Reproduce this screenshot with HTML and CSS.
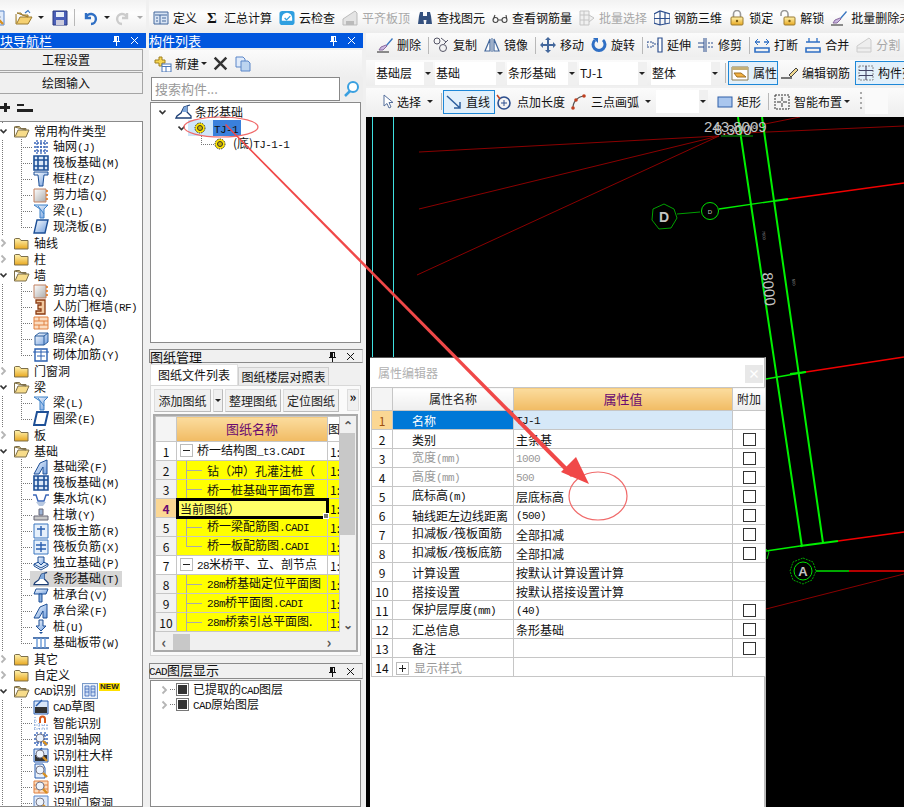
FILE: index.html
```html
<!DOCTYPE html>
<html lang="zh-CN">
<head>
<meta charset="utf-8">
<title>构件列表</title>
<link rel="stylesheet" href="styles.css">
</head>
<body>
<svg class="sprite" xmlns="http://www.w3.org/2000/svg">
<defs>
<linearGradient id="gy" x1="0" y1="0" x2="0" y2="1"><stop offset="0" stop-color="#fff3b0"/><stop offset="1" stop-color="#e8a820"/></linearGradient>
<linearGradient id="gb" x1="0" y1="0" x2="1" y2="1"><stop offset="0" stop-color="#ffffff"/><stop offset="1" stop-color="#6f9ede"/></linearGradient>
<linearGradient id="gw" x1="0" y1="0" x2="1" y2="1"><stop offset="0" stop-color="#fff"/><stop offset="1" stop-color="#aaa"/></linearGradient>
<symbol id="folder" viewBox="0 0 17 16"><path d="M1.5 4V14H15V5.5H8L6.5 3.5H2.5Z" fill="url(#gy)" stroke="#7d6f4a"/></symbol>
<symbol id="folderopen" viewBox="0 0 17 16"><path d="M1.5 4V14H13L16 7H5L2.5 13M13 7V5.5H8L6.5 3.5H2.5L1.5 4Z" fill="#f7dc8a" stroke="#7d6f4a"/></symbol>
<symbol id="chev" viewBox="0 0 8 16"><path d="M.5 6.5L3.5 9.5L6.5 6.5" fill="none" stroke="#333" stroke-width="1.6"/></symbol>
<symbol id="chevg" viewBox="0 0 8 16"><path d="M1.5 4.5L5 8L1.5 11.5" fill="none" stroke="#b5b5b5" stroke-width="1.8"/></symbol>
<symbol id="grid" viewBox="0 0 16 16"><path d="M1 4H15M1 8H15M1 12H15M4 1V15M8 1V15M12 1V15" stroke="#3a66b8" stroke-width="1.3" stroke-dasharray="2 1"/></symbol>
<symbol id="raft" viewBox="0 0 16 16"><path d="M1 1H15V15H1Z" fill="#dbe8f8" stroke="#1d4f96" stroke-width="1.6"/><path d="M5 1V15M11 1V15M1 5H15M1 11H15" stroke="#1d4f96" stroke-width="1.6"/></symbol>
<symbol id="col" viewBox="0 0 16 16"><path d="M1 1H15V4H11L10 13V15H6V13L5 4H1Z" fill="url(#gb)" stroke="#1d4f96"/></symbol>
<symbol id="wall" viewBox="0 0 16 16"><path d="M1 2H13V15H1Z" fill="url(#gw)" stroke="#c08060"/><path d="M13 4H15M13 8H15M13 12H15" stroke="#e07010" stroke-width="1.5"/></symbol>
<symbol id="beam" viewBox="0 0 16 16"><path d="M1 2H15L11 6V15H7V6Z" fill="url(#gb)" stroke="#3a80c8"/><path d="M5 3L11 11" stroke="#3a80c8"/></symbol>
<symbol id="slab" viewBox="0 0 16 16"><path d="M4 1H15L12 14H1Z" fill="url(#gb)" stroke="#1d4f96" stroke-width="1.4"/></symbol>
<symbol id="ringb" viewBox="0 0 16 16"><path d="M4 1H15L12 14H1Z" fill="#fff" stroke="#1d4f96" stroke-width="2"/></symbol>
<symbol id="rf" viewBox="0 0 16 16"><path d="M3 1H12V15H3V12H8V10H5V6H8V4H3Z" fill="#f2c9a0" stroke="#8a3a10" stroke-width="1.3"/></symbol>
<symbol id="brick" viewBox="0 0 16 16"><path d="M1 2H15V14H1Z" fill="#fbdcc0" stroke="#e08040"/><path d="M1 6H15M1 10H15M6 2V6M11 6V10M6 10V14" stroke="#e08040"/></symbol>
<symbol id="hb" viewBox="0 0 16 16"><path d="M2 5L6 2H15V11L11 14H2Z" fill="url(#gb)" stroke="#2d5f9e"/><path d="M2 5H11V14M11 5L15 2" fill="none" stroke="#2d5f9e"/></symbol>
<symbol id="jj" viewBox="0 0 16 16"><path d="M2 2H14V14H2Z" fill="#fff" stroke="#2a5fb0" stroke-width="1.4"/><path d="M0 5H16M8 3V13M4 9H12" stroke="#2a5fb0"/></symbol>
<symbol id="jl" viewBox="0 0 16 16"><path d="M1 15L7 4L14 1V15H10V8L6 15Z" fill="url(#gb)" stroke="#1d4f96"/></symbol>
<symbol id="pit" viewBox="0 0 16 16"><path d="M0 4H3L5 10H11L13 4H16" fill="none" stroke="#3a66b8" stroke-width="1.4"/><path d="M3 11H13L10 15H6Z" fill="#b8c8e0"/></symbol>
<symbol id="pier" viewBox="0 0 16 16"><path d="M6 2H10V8H6Z" fill="#9db4d6" stroke="#667"/><path d="M1 9H15V13H1Z" fill="#c8c8c8" stroke="#667"/></symbol>
<symbol id="rm" viewBox="0 0 16 16"><path d="M1 1H15V15H1Z" fill="#e6f0fb" stroke="#3a76c0"/><path d="M4 6H12M8 3V13" stroke="#2a5fb0" stroke-width="1.4"/></symbol>
<symbol id="rn" viewBox="0 0 16 16"><path d="M1 1H15V15H1Z" fill="#e6f0fb" stroke="#3a76c0"/><path d="M3 6H13M3 10H13M8 3V13" stroke="#2a5fb0" stroke-width="1.4"/></symbol>
<symbol id="iso" viewBox="0 0 16 16"><path d="M1 9L8 13L15 9L8 6Z" fill="#dbe8f8" stroke="#1d4f96"/><path d="M5 7V2H11V7L8 10Z" fill="url(#gb)" stroke="#1d4f96"/><path d="M1 9V11L8 15L15 11V9" fill="none" stroke="#1d4f96"/></symbol>
<symbol id="strip" viewBox="0 0 17 16"><path d="M1 14H16V12L12 8V2L15 1L9 3L6 9L2 12Z" fill="#fff" stroke="#1d3f76" stroke-width="1.3"/><path d="M9 3L12 2V8H7Z" fill="#7fa8dc"/></symbol>
<symbol id="cap" viewBox="0 0 16 16"><path d="M3 2H15L13 7H1Z" fill="url(#gb)" stroke="#1d4f96"/><path d="M6 7H9V15H6Z" fill="#8ab0e0" stroke="#1d4f96"/></symbol>
<symbol id="pile" viewBox="0 0 16 16"><path d="M6 1H10V7H13L8 12L3 7H6Z" fill="url(#gb)" stroke="#1d4f96"/><path d="M6 13L8 15L10 13Z" fill="#1d4f96"/></symbol>
<symbol id="band" viewBox="0 0 16 16"><path d="M0 3H16M0 13H16" stroke="#1d4f96" stroke-width="1.4"/><path d="M4 3V13M8 3V13M12 3V13" stroke="#6a9ad8" stroke-width="1.4"/></symbol>
<symbol id="cad" viewBox="0 0 16 16"><path d="M1 2H15V15H1Z" fill="#d9e6f8" stroke="#2a5fb0"/><path d="M3 7L9 1" stroke="#2a5fb0" stroke-width="1.4"/><rect x="2" y="8" width="12" height="6" fill="#333"/></symbol>
<symbol id="magnet" viewBox="0 0 16 16"><path d="M1 6H4M1 10H16M1 14H16M2 2V15M6 8V15M10 10V15M14 10V15" stroke="#5a86c8" stroke-dasharray="1 1.5"/><path d="M6 8V4A3.5 3.5 0 0 1 13 4V8H11V4A1.5 1.5 0 0 0 8 4V8Z" fill="#d85a1c"/></symbol>
<symbol id="mag" viewBox="0 0 16 16"><circle cx="7" cy="7" r="4" fill="#eef4fc" stroke="#778"/><path d="M10 10L14 14" stroke="#d89020" stroke-width="2.4"/></symbol>
<symbol id="sgrid" viewBox="0 0 16 16"><use href="#grid"/><use href="#mag"/></symbol>
<symbol id="scol" viewBox="0 0 16 16"><path d="M2 1H10L12 5V15H2Z" fill="#e8f0fa" stroke="#2a5fb0"/><use href="#mag"/></symbol>
<symbol id="swall" viewBox="0 0 16 16"><use href="#brick"/><use href="#mag"/></symbol>
<symbol id="sdoor" viewBox="0 0 16 16"><path d="M1 1H15V15H1Z" fill="#dfeafa" stroke="#5a86c8"/><use href="#mag"/></symbol>
<symbol id="scad" viewBox="0 0 16 16"><use href="#cad"/><use href="#mag"/></symbol>
<symbol id="gear" viewBox="0 0 12 12"><circle cx="6" cy="6" r="5" fill="#ffe600" stroke="#333" stroke-dasharray="1.5 1"/><circle cx="6" cy="6" r="2.5" fill="#c8b000" stroke="#333"/></symbol>
<symbol id="pin" viewBox="0 0 9 11"><path d="M2 1H7V6H8V7H5V11H4V7H1V6H2ZM5 2V6H6V2Z" fill="currentColor"/></symbol>
<symbol id="x" viewBox="0 0 9 9"><path d="M1 1L8 8M8 1L1 8" stroke="currentColor" fill="none"/></symbol>
<symbol id="openf" viewBox="0 0 18 16"><path d="M1 4V14H13L17 7H5L2 13M13 7V5H7L6 3H2Z" fill="#f5d070" stroke="#9a7a30"/><path d="M10 3L13 0.5L15 3" fill="none" stroke="#3a76c0" stroke-width="1.2"/></symbol>
<symbol id="save" viewBox="0 0 16 16"><path d="M1 1H15V15H1Z" fill="#4a5fb8" stroke="#2a3a80"/><rect x="4" y="2" width="8" height="5" fill="#e8eef8"/><rect x="4" y="10" width="8" height="5" fill="#ccd"/></symbol>
<symbol id="undo" viewBox="0 0 14 16"><path d="M3 3V8H8M3 8A5 5 0 1 1 8 14" fill="none" stroke="#2f6fc4" stroke-width="2.4"/></symbol>
<symbol id="redo" viewBox="0 0 14 16"><path d="M11 3V8H6M11 8A5 5 0 1 0 6 14" fill="none" stroke="#ccc" stroke-width="2.4"/></symbol>
<symbol id="def" viewBox="0 0 16 16"><path d="M1 2H15V14H1Z" fill="#d8e4f4" stroke="#44689c"/><path d="M2 5H14M7 5V14M9 8H13M9 11H13M3 8H5M3 11H5" stroke="#44689c"/></symbol>
<symbol id="cloud" viewBox="0 0 17 16"><rect x="0.5" y="0.5" width="16" height="15" rx="3" fill="#2f9fe0"/><path d="M3 8A5.500 5.500 0 0 1 14 8V11H3Z" fill="#fff"/><path d="M6 8L8 10L12 6" fill="none" stroke="#2f9fe0" stroke-width="1.4"/></symbol>
<symbol id="level" viewBox="0 0 16 16"><path d="M1 15V9L13 1L15 3V15Z" fill="#e4e4e4" stroke="#bbb"/><path d="M4 11H12V15H4Z" fill="#bbb"/></symbol>
<symbol id="bino" viewBox="0 0 16 16"><path d="M3 2H6V6L7 14H1L2 6ZM10 2H13L14 6L15 14H9L10 6ZM6 6H10V10H6Z" fill="#34507e"/></symbol>
<symbol id="glasses" viewBox="0 0 16 16"><path d="M1 10A2.500 2.500 0 1 0 6 10A2.500 2.500 0 1 0 1 10M10 10A2.500 2.500 0 1 0 15 10A2.500 2.500 0 1 0 10 10M6 10H10M1 10L3 5M15 10L14 5" fill="none" stroke="#444" stroke-width="1.1"/></symbol>
<symbol id="batch" viewBox="0 0 16 16"><path d="M1 1H10V15H1ZM1 5H10M1 10H10M5 1V15M10 5L15 8L10 12" fill="#f0f0f0" stroke="#c4c4c4"/></symbol>
<symbol id="r3d" viewBox="0 0 16 16"><path d="M0 4L6 1L16 4V13L6 15L0 13ZM6 1V15M11 2V14M0 8.500H16" fill="none" stroke="#2d4f8e" stroke-width="1.2"/></symbol>
<symbol id="lock" viewBox="0 0 14 16"><path d="M3.500 7V4A3.500 3.500 0 0 1 10.500 4V7" fill="none" stroke="#999" stroke-width="1.6"/><rect x="1" y="7" width="12" height="8" rx="1" fill="url(#gy)" stroke="#9a7a30"/><circle cx="7" cy="11" r="1.200" fill="#7a5a10"/></symbol>
<symbol id="unlock" viewBox="0 0 16 16"><path d="M1 6V4A3 3 0 0 1 8 4V7" fill="none" stroke="#999" stroke-width="1.6"/><rect x="4" y="7" width="11" height="8" rx="1" fill="url(#gy)" stroke="#9a7a30"/><circle cx="9.500" cy="11" r="1.200" fill="#7a5a10"/></symbol>
<symbol id="brush" viewBox="0 0 16 16"><path d="M9 8L15 1L16 2L10 9Z" fill="#3a76c0"/><path d="M9 8L10 9L6 13H2L4 10Z" fill="#c9b8e0" stroke="#8a6aa0"/><path d="M0 15H12" stroke="#222"/></symbol>
<symbol id="newi" viewBox="0 0 18 16"><path d="M1 4H5V1H8V4H11V7H8V10H5V7H1Z" fill="#f7d650" stroke="#a08020"/><rect x="8" y="8" width="9" height="8" fill="#fff" stroke="#4a76b8"/><path d="M8 10.500H17M12 11V16" stroke="#4a76b8"/></symbol>
<symbol id="copyd" viewBox="0 0 16 16"><path d="M1 1H8L10 3V11H1Z" fill="#e0ebfa" stroke="#5a86c8"/><path d="M6 5H13L15 7V15H6Z" fill="#bcd4f0" stroke="#5a86c8"/></symbol>
<symbol id="copyr" viewBox="0 0 16 16"><circle cx="4" cy="4" r="3" fill="none" stroke="#556"/><circle cx="10" cy="11" r="3.500" fill="none" stroke="#556"/><path d="M8 1L13 5M15 3L11 7" stroke="#556"/></symbol>
<symbol id="mirror" viewBox="0 0 16 16"><path d="M6 2V14H1ZM10 2V14H15Z" fill="#fff" stroke="#44689c" stroke-width="1.2"/><path d="M8 1V15" stroke="#44689c"/></symbol>
<symbol id="move" viewBox="0 0 16 16"><path d="M8 0L11 3H9V7H13V5L16 8L13 11V9H9V13H11L8 16L5 13H7V9H3V11L0 8L3 5V7H7V3H5Z" fill="#44689c"/></symbol>
<symbol id="rotate" viewBox="0 0 14 16"><path d="M3 3A6 6 0 1 0 11 3" fill="none" stroke="#2f6fc4" stroke-width="3"/><path d="M1 1H6V6Z" fill="#2f6fc4"/></symbol>
<symbol id="extend" viewBox="0 0 16 16"><path d="M11 1H15V15H11Z" fill="#fff" stroke="#2d4f8e" stroke-width="1.200"/><path d="M0 5H6V10H0ZM7 7H11" fill="none" stroke="#2d4f8e" stroke-dasharray="2 1"/></symbol>
<symbol id="trim" viewBox="0 0 16 16"><path d="M6 1V15M0 6H6M0 10H6" stroke="#2d4f8e" fill="none"/><path d="M10 6H16M10 10H16" stroke="#2d4f8e" stroke-dasharray="2 1"/><path d="M8 1V15" stroke="#2d4f8e"/></symbol>
<symbol id="brk" viewBox="0 0 16 16"><path d="M1 11H15V15H1ZM1 5H6M10 5H15" fill="none" stroke="#2f6fc4" stroke-width="1.600"/><path d="M4 2L1 5L4 8M12 2L15 5L12 8" fill="none" stroke="#2f6fc4"/></symbol>
<symbol id="merge" viewBox="0 0 16 16"><path d="M1 11H15V15H1Z" fill="none" stroke="#2f6fc4" stroke-width="1.600"/><path d="M1 5H15M4 1V5M12 1V5" stroke="#2f6fc4" stroke-width="1.300"/></symbol>
<symbol id="split" viewBox="0 0 16 16"><path d="M1 15V9L13 1L15 3V15Z" fill="#eee" stroke="#ccc"/><path d="M1 11H15" stroke="#ccc"/></symbol>
<symbol id="attr" viewBox="0 0 18 16"><path d="M1 2H17V15H1Z" fill="#fff" stroke="#8a7a50"/><path d="M1 2H17V5H1Z" fill="#c4b078"/><path d="M3 8H10L15 12H6Z" fill="#f2b040" stroke="#a07020"/></symbol>
<symbol id="pencil" viewBox="0 0 18 16"><path d="M8 10L15 3L17 5L10 12Z" fill="#f0d890" stroke="#444"/><path d="M0 13H11" stroke="#222" stroke-width="1.200"/></symbol>
<symbol id="clist" viewBox="0 0 16 16"><path d="M1 1H15V15H1Z" fill="none" stroke="#888" stroke-dasharray="2 1"/><path d="M8 1V15M1 5.500H15M1 10.500H15" stroke="#446" stroke-width="1.100"/></symbol>
<symbol id="cursor" viewBox="0 0 12 16"><path d="M2 1V12L5 9.500L7 14L9 13L7 8.500H11Z" fill="#fff" stroke="#56709c"/></symbol>
<symbol id="line" viewBox="0 0 16 16"><path d="M1 2L14 14M14 8V14H8" fill="none" stroke="#2d5f9e" stroke-width="1.500"/></symbol>
<symbol id="ptlen" viewBox="0 0 16 16"><circle cx="8" cy="9" r="6" fill="none" stroke="#2d4f8e" stroke-width="1.600"/><path d="M8 6V12M5 9H11" stroke="#2d4f8e"/><path d="M1 1L4 5" stroke="#c04020" stroke-width="1.600"/></symbol>
<symbol id="arc" viewBox="0 0 16 16"><path d="M2 15A12 12 0 0 1 13 2" fill="none" stroke="#555" stroke-width="1.200"/><circle cx="2" cy="14" r="1.800" fill="#c04020"/><circle cx="5" cy="6" r="1.800" fill="#c04020"/><circle cx="13" cy="2" r="1.800" fill="#c04020"/></symbol>
<symbol id="rect" viewBox="0 0 16 16"><rect x="1" y="3" width="14" height="10" fill="#a9c6ee" stroke="#2f5fa8"/></symbol>
<symbol id="smart" viewBox="0 0 16 16"><rect x="1" y="1" width="14" height="14" fill="#f4f4f4" stroke="#333" stroke-dasharray="2 1"/><path d="M8 3V7M8 9V13M3 8H7M9 8H13" stroke="#333"/></symbol>
<symbol id="find" viewBox="0 0 18 18"><circle cx="10" cy="7" r="5" fill="#fff" stroke="#3aa0e0" stroke-width="2"/><path d="M7 11L2 16" stroke="#3aa0e0" stroke-width="2.500"/></symbol>
<symbol id="minusbox" viewBox="0 0 13 13"><rect x="0.500" y="0.500" width="12" height="12" fill="#fff" stroke="#bbb"/><path d="M3 6.500H10" stroke="#222"/></symbol>
<symbol id="plusbox" viewBox="0 0 13 13"><rect x="0.500" y="0.500" width="12" height="12" fill="#fff" stroke="#bbb"/><path d="M3 6.500H10M6.500 3V10" stroke="#222"/></symbol>
<symbol id="cols" viewBox="0 0 16 16"><rect x="0.500" y="0.500" width="15" height="15" fill="#e8f0fa" stroke="#7a9ac8"/><path d="M3 3H7V13H3ZM9 3H13V13H9ZM3 6H7M3 9H7M9 6H13M9 9H13" fill="#cfe0f5" stroke="#3a66b8" stroke-width="0.800"/></symbol>
</defs>
</svg>

<div class="app">
  <header class="topbar">
    <div class="topleft">
      <svg class="doc"><use href="#sdoor"/></svg>
      <svg class="ico18 ml-open"><use href="#openf"/></svg>
      <span class="dd ml-dd"></span>
      <svg class="ico16 ml-save"><use href="#save"/></svg>
      <span class="sep ml-sepa"></span>
      <svg class="ico16 ml-undo"><use href="#undo"/></svg>
      <span class="dd ml-dd2"></span>
      <svg class="ico16 ml-redo"><use href="#redo"/></svg>
      <span class="dd ddg ml-dd2"></span>
    </div>
    <div class="tb tb-main">
      <span class="btn first"><svg class="ico16"><use href="#def"/></svg>定义</span>
      <span class="btn"><b class="sigma">Σ</b>汇总计算</span>
      <span class="btn"><svg class="ico16"><use href="#cloud"/></svg>云检查</span>
      <span class="btn off"><svg class="ico16"><use href="#level"/></svg>平齐板顶</span>
      <span class="btn"><svg class="ico16"><use href="#bino"/></svg>查找图元</span>
      <span class="btn"><svg class="ico16"><use href="#glasses"/></svg>查看钢筋量</span>
      <span class="btn off"><svg class="ico16"><use href="#batch"/></svg>批量选择</span>
      <span class="btn"><svg class="ico16"><use href="#r3d"/></svg>钢筋三维</span>
      <span class="btn"><svg class="ico16"><use href="#lock"/></svg>锁定</span>
      <span class="btn"><svg class="ico16"><use href="#unlock"/></svg>解锁</span>
      <span class="btn"><svg class="ico16"><use href="#brush"/></svg>批量删除未</span>
    </div>
  </header>

  <main class="main">
    <aside class="nav">
      <div class="title"><span class="title-t cut">块导航栏</span><svg class="pin"><use href="#pin"/></svg><svg class="close"><use href="#x"/></svg></div>
      <div class="navbtn">工程设置</div>
      <div class="navbtn nb2">绘图输入</div>
      <div class="expand"><span class="pm plus"></span><span class="pm minus"></span></div>
      <div class="navtree">
        <div class="t1"><svg class="chev"><use href="#chev"/></svg><svg class="fld"><use href="#folderopen"/></svg>常用构件类型</div>
        <div class="t2"><svg class="ico16"><use href="#grid"/></svg><span>轴网<i class="m">(J)</i></span></div>
        <div class="t2"><svg class="ico16"><use href="#raft"/></svg><span>筏板基础<i class="m">(M)</i></span></div>
        <div class="t2"><svg class="ico16"><use href="#col"/></svg><span>框柱<i class="m">(Z)</i></span></div>
        <div class="t2"><svg class="ico16"><use href="#wall"/></svg><span>剪力墙<i class="m">(Q)</i></span></div>
        <div class="t2"><svg class="ico16"><use href="#beam"/></svg><span>梁<i class="m">(L)</i></span></div>
        <div class="t2 end"><svg class="ico16"><use href="#slab"/></svg><span>现浇板<i class="m">(B)</i></span></div>
        <div class="t1"><svg class="chev"><use href="#chevg"/></svg><svg class="fld"><use href="#folder"/></svg>轴线</div>
        <div class="t1"><svg class="chev"><use href="#chevg"/></svg><svg class="fld"><use href="#folder"/></svg>柱</div>
        <div class="t1"><svg class="chev"><use href="#chev"/></svg><svg class="fld"><use href="#folderopen"/></svg>墙</div>
        <div class="t2"><svg class="ico16"><use href="#wall"/></svg><span>剪力墙<i class="m">(Q)</i></span></div>
        <div class="t2"><svg class="ico16"><use href="#rf"/></svg><span>人防门框墙<i class="m">(RF)</i></span></div>
        <div class="t2"><svg class="ico16"><use href="#brick"/></svg><span>砌体墙<i class="m">(Q)</i></span></div>
        <div class="t2"><svg class="ico16"><use href="#hb"/></svg><span>暗梁<i class="m">(A)</i></span></div>
        <div class="t2 end"><svg class="ico16"><use href="#jj"/></svg><span>砌体加筋<i class="m">(Y)</i></span></div>
        <div class="t1"><svg class="chev"><use href="#chevg"/></svg><svg class="fld"><use href="#folder"/></svg>门窗洞</div>
        <div class="t1"><svg class="chev"><use href="#chev"/></svg><svg class="fld"><use href="#folderopen"/></svg>梁</div>
        <div class="t2"><svg class="ico16"><use href="#beam"/></svg><span>梁<i class="m">(L)</i></span></div>
        <div class="t2 end"><svg class="ico16"><use href="#ringb"/></svg><span>圈梁<i class="m">(E)</i></span></div>
        <div class="t1"><svg class="chev"><use href="#chevg"/></svg><svg class="fld"><use href="#folder"/></svg>板</div>
        <div class="t1"><svg class="chev"><use href="#chev"/></svg><svg class="fld"><use href="#folderopen"/></svg>基础</div>
        <div class="t2"><svg class="ico16"><use href="#jl"/></svg><span>基础梁<i class="m">(F)</i></span></div>
        <div class="t2"><svg class="ico16"><use href="#raft"/></svg><span>筏板基础<i class="m">(M)</i></span></div>
        <div class="t2"><svg class="ico16"><use href="#pit"/></svg><span>集水坑<i class="m">(K)</i></span></div>
        <div class="t2"><svg class="ico16"><use href="#pier"/></svg><span>柱墩<i class="m">(Y)</i></span></div>
        <div class="t2"><svg class="ico16"><use href="#rm"/></svg><span>筏板主筋<i class="m">(R)</i></span></div>
        <div class="t2"><svg class="ico16"><use href="#rn"/></svg><span>筏板负筋<i class="m">(X)</i></span></div>
        <div class="t2"><svg class="ico16"><use href="#iso"/></svg><span>独立基础<i class="m">(P)</i></span></div>
        <div class="t2"><span class="hl"><svg class="ico16"><use href="#strip"/></svg><span>条形基础<i class="m">(T)</i></span></span></div>
        <div class="t2"><svg class="ico16"><use href="#cap"/></svg><span>桩承台<i class="m">(V)</i></span></div>
        <div class="t2"><svg class="ico16"><use href="#jl"/></svg><span>承台梁<i class="m">(F)</i></span></div>
        <div class="t2"><svg class="ico16"><use href="#pile"/></svg><span>桩<i class="m">(U)</i></span></div>
        <div class="t2 end"><svg class="ico16"><use href="#band"/></svg><span>基础板带<i class="m">(W)</i></span></div>
        <div class="t1"><svg class="chev"><use href="#chevg"/></svg><svg class="fld"><use href="#folder"/></svg>其它</div>
        <div class="t1"><svg class="chev"><use href="#chevg"/></svg><svg class="fld"><use href="#folder"/></svg>自定义</div>
        <div class="t1"><svg class="chev"><use href="#chev"/></svg><svg class="fld"><use href="#folderopen"/></svg><span><i class="m">CAD</i>识别</span><svg class="ico16 cols"><use href="#cols"/></svg><span class="new">NEW</span></div>
        <div class="t2"><svg class="ico16"><use href="#cad"/></svg><span><i class="m">CAD</i>草图</span></div>
        <div class="t2"><svg class="ico16"><use href="#magnet"/></svg><span>智能识别</span></div>
        <div class="t2"><svg class="ico16"><use href="#sgrid"/></svg><span>识别轴网</span></div>
        <div class="t2"><svg class="ico16"><use href="#scad"/></svg><span>识别柱大样</span></div>
        <div class="t2"><svg class="ico16"><use href="#scol"/></svg><span>识别柱</span></div>
        <div class="t2"><svg class="ico16"><use href="#swall"/></svg><span>识别墙</span></div>
        <div class="t2"><svg class="ico16"><use href="#sdoor"/></svg><span>识别门窗洞</span></div>
      </div>
    </aside>

    <section class="mid">
      <div class="title"><span class="title-t">构件列表</span><svg class="pin"><use href="#pin"/></svg><svg class="close"><use href="#x"/></svg></div>
      <div class="newbar">
        <svg class="newicon"><use href="#newi"/></svg><span class="newtxt">新建</span><span class="dd dd-new"></span>
        <svg class="del"><use href="#x"/></svg><svg class="ico16 cpy"><use href="#copyd"/></svg>
      </div>
      <div class="search"><div class="sinput">搜索构件...</div><div class="sbtn"><svg class="ico18"><use href="#find"/></svg></div></div>
      <div class="ctree">
        <div class="c1"><svg class="chev"><use href="#chev"/></svg><svg class="strip"><use href="#strip"/></svg>条形基础</div>
        <div class="c2"><svg class="chev"><use href="#chev"/></svg><span class="csel"><svg class="gear"><use href="#gear"/></svg></span><span class="cname"><i class="m">TJ-1</i></span></div>
        <div class="c3"><svg class="gear"><use href="#gear"/></svg><span class="csub">(底)<i class="m">TJ-1-1</i></span></div>
      </div>

      <div class="title grey t-draw"><span class="title-t">图纸管理</span><svg class="pin"><use href="#pin"/></svg><svg class="close"><use href="#x"/></svg></div>
      <div class="tabs"><span class="tab on">图纸文件列表</span><span class="tab">图纸楼层对照表</span></div>
      <div class="dpanel">
        <div class="dbar"><span class="dbtn w57">添加图纸</span><span class="dbtn w10"><span class="dd"></span></span><span class="dbtn w56">整理图纸</span><span class="dbtn w56">定位图纸</span><span class="more">»</span></div>
        <div class="dframe">
          <div class="dscroll">
            <table class="dt">
              <colgroup><col class="c-n"><col class="c-name"><col class="c-r"></colgroup>
              <thead><tr><th class="n"></th><th class="hot">图纸名称</th><th class="plain">图</th></tr></thead>
              <tbody>
                <tr><td class="n">1</td><td class="w"><svg class="box"><use href="#minusbox"/></svg>桥一结构图<i class="m">_t3.CADI</i></td><td>1:</td></tr>
                <tr class="y"><td class="n">2</td><td class="l">钻（冲）孔灌注桩（</td><td>1:</td></tr>
                <tr class="y"><td class="n">3</td><td class="l">桥一桩基础平面布置</td><td>1:</td></tr>
                <tr class="y cur"><td class="n">4</td><td class="active">当前图纸）</td><td>1:</td></tr>
                <tr class="y"><td class="n">5</td><td class="l">桥一梁配筋图<i class="m">.CADI</i></td><td>1:</td></tr>
                <tr class="y"><td class="n">6</td><td class="l last">桥一板配筋图<i class="m">.CADI</i></td><td>1:</td></tr>
                <tr><td class="n">7</td><td class="w"><svg class="box"><use href="#minusbox"/></svg><i class="m">28</i>米桥平、立、剖节点</td><td>1:</td></tr>
                <tr class="y"><td class="n">8</td><td class="l"><i class="m">28m</i>桥基础定位平面图</td><td>1:</td></tr>
                <tr class="y"><td class="n">9</td><td class="l"><i class="m">28m</i>桥平面图<i class="m">.CADI</i></td><td>1:</td></tr>
                <tr class="y"><td class="n">10</td><td class="l"><i class="m">28m</i>桥索引总平面图.</td><td>1:</td></tr>
              </tbody>
            </table>
            <div class="vbar"><span class="arr">⌃</span><div class="vthumb"></div><span class="arr arr-d">⌄</span></div>
          </div>
          <div class="hbar"><span class="harr">‹</span><div class="hthumb"></div><span class="harr harr-r">›</span></div>
        </div>
      </div>

      <div class="title grey t-cad"><span class="title-t cadt"><i class="m">CAD</i>图层显示</span><svg class="pin"><use href="#pin"/></svg><svg class="close"><use href="#x"/></svg></div>
      <div class="cadtree">
        <div class="l1"><svg class="chev"><use href="#chevg"/></svg><span class="sq"></span><span>已提取的<i class="m">CAD</i>图层</span></div>
        <div class="l1"><svg class="chev"><use href="#chevg"/></svg><span class="sq"></span><span><i class="m">CAD</i>原始图层</span></div>
      </div>
    </section>

    <section class="work">
      <div class="tb tb-edit">
        <span class="btn first"><svg class="ico16"><use href="#brush"/></svg>删除</span>
        <span class="sep"></span>
        <span class="btn"><svg class="ico16"><use href="#copyr"/></svg>复制</span>
        <span class="btn"><svg class="ico16"><use href="#mirror"/></svg>镜像</span>
        <span class="sep"></span>
        <span class="btn"><svg class="ico16"><use href="#move"/></svg>移动</span>
        <span class="btn"><svg class="ico16"><use href="#rotate"/></svg>旋转</span>
        <span class="sep"></span>
        <span class="btn"><svg class="ico16"><use href="#extend"/></svg>延伸</span>
        <span class="btn"><svg class="ico16"><use href="#trim"/></svg>修剪</span>
        <span class="sep"></span>
        <span class="btn"><svg class="ico16"><use href="#brk"/></svg>打断</span>
        <span class="btn"><svg class="ico16"><use href="#merge"/></svg>合并</span>
        <span class="btn off"><svg class="ico16"><use href="#split"/></svg>分割</span>
      </div>
      <div class="tb tb-sel">
        <span class="sel s58">基础层<span class="dd"></span></span>
        <span class="sel s70">基础<span class="dd"></span></span>
        <span class="sel s70">条形基础<span class="dd"></span></span>
        <span class="sel s68">TJ-1<span class="dd"></span></span>
        <span class="sel s69 ml4">整体<span class="dd"></span></span>
        <span class="sep sp-sel"></span>
        <span class="tog tog-a"><svg class="ico18"><use href="#attr"/></svg>属性</span>
        <span class="btn b-edit"><svg class="ico18"><use href="#pencil"/></svg>编辑钢筋</span>
        <span class="tog tog-b"><svg class="ico16"><use href="#clist"/></svg>构件列</span>
      </div>
      <div class="tb tb-draw">
        <span class="btn b-pick"><svg class="cur-i"><use href="#cursor"/></svg>选择</span>
        <span class="dd d-pick"></span>
        <span class="sep sp-pick"></span>
        <span class="tog tog-line"><svg class="ico16"><use href="#line"/></svg>直线</span>
        <span class="btn b-pt"><svg class="ico16"><use href="#ptlen"/></svg>点加长度</span>
        <span class="btn b-arc"><svg class="ico16"><use href="#arc"/></svg>三点画弧</span>
        <span class="dd d-arc"></span>
        <span class="sel s50"><span class="dd"></span></span>
        <span class="btn b-rect"><svg class="ico16"><use href="#rect"/></svg>矩形</span>
        <span class="sep sp-rect"></span>
        <span class="btn"><svg class="ico16"><use href="#smart"/></svg>智能布置</span>
        <span class="dd d-smart"></span>
        <span class="grip"></span>
        <span class="blank"></span>
      </div>

      <div class="canvas">
        <svg class="cad" viewBox="366 117 538 690" xmlns="http://www.w3.org/2000/svg">
          <g fill="none">
            <path d="M372.500 117V357M393.500 117V357" stroke="#3fe0e0"/>
            <g stroke="#8a0000">
              <path d="M419 152L719 136M419 209L719 136M417 275L719 136M722 134L904 126M760 125L800 117M766 609L904 574"/>
            </g>
            <g stroke="#00f000" stroke-width="2">
              <path d="M738 117L802 547M762 117L823 543M800 546L838 541"/>
            </g>
            <path d="M766 551L800 546M719 209L774 201M766 379L806 372" stroke="#00f000" stroke-width="1.300"/>
            <path d="M774 201L788 199M790 374L806 372" stroke="#00f000" stroke-width="2"/>
            <path d="M788 199L904 183M838 541L904 532M806 372L904 357M849 571H904" stroke="#f00000" stroke-width="1.500"/>
            <path d="M816 571H849" stroke="#00e000" stroke-width="1.300"/>
            <path d="M677 214L700 212M721 136H753" stroke="#00a000"/>
            <circle cx="710" cy="211" r="8.500" stroke="#00e000"/>
            <path d="M664 204L674 209L677 218L671 228L659 229L652 220L653 209Z" stroke="#00a000"/>
            <circle cx="803" cy="571" r="9" stroke="#00e000"/>
            <path d="M803 558L813 562L816 571L812 580L803 584L793 580L790 571L793 562Z" stroke="#00a000" stroke-dasharray="2 1"/>
            <path d="M766 549L769 552L767 559" stroke="#00c000"/>
          </g>
          <text class="ct t-d" x="664" y="222">D</text>
          <text class="ct t-a" x="803" y="576">A</text>
          <text class="ct t-s" x="710" y="214">D</text>
          <text class="ct t-top" x="704" y="132">243.8009</text>
          <text class="ct t-top" x="714" y="135">8.300°</text>
          <text class="ct t-8k" transform="translate(762 273) rotate(84)">8000</text>
          <text class="ct t-mini" transform="translate(762 231) rotate(84)">7500</text>
          <text class="ct t-mini" transform="translate(792 279) rotate(84)">500</text>
        </svg>

        <div class="editor">
          <div class="ed-title"><span>属性编辑器</span><span class="ed-x">×</span></div>
          <table class="pt">
            <colgroup><col class="p-n"><col class="p-name"><col class="p-val"><col class="p-add"></colgroup>
            <thead><tr><th class="n"></th><th class="ph">属性名称</th><th class="hot">属性值</th><th class="ph">附加</th></tr></thead>
            <tbody>
              <tr class="now"><td class="n">1</td><td class="nm">名称</td><td class="vl"><i class="m">TJ-1</i></td><td></td></tr>
              <tr><td class="n">2</td><td class="nm">类别</td><td class="vl">主条基</td><td><span class="cb"></span></td></tr>
              <tr class="dim"><td class="n">3</td><td class="nm">宽度<i class="m">(mm)</i></td><td class="vl"><i class="m">1000</i></td><td><span class="cb"></span></td></tr>
              <tr class="dim"><td class="n">4</td><td class="nm">高度<i class="m">(mm)</i></td><td class="vl"><i class="m">500</i></td><td><span class="cb"></span></td></tr>
              <tr><td class="n">5</td><td class="nm">底标高<i class="m">(m)</i></td><td class="vl">层底标高</td><td><span class="cb"></span></td></tr>
              <tr><td class="n">6</td><td class="nm">轴线距左边线距离</td><td class="vl"><i class="m">(500)</i></td><td><span class="cb"></span></td></tr>
              <tr><td class="n">7</td><td class="nm">扣减板<i class="m">/</i>筏板面筋</td><td class="vl">全部扣减</td><td><span class="cb"></span></td></tr>
              <tr><td class="n">8</td><td class="nm">扣减板<i class="m">/</i>筏板底筋</td><td class="vl">全部扣减</td><td><span class="cb"></span></td></tr>
              <tr><td class="n">9</td><td class="nm">计算设置</td><td class="vl">按默认计算设置计算</td><td></td></tr>
              <tr><td class="n">10</td><td class="nm">搭接设置</td><td class="vl">按默认搭接设置计算</td><td></td></tr>
              <tr><td class="n">11</td><td class="nm">保护层厚度<i class="m">(mm)</i></td><td class="vl"><i class="m">(40)</i></td><td><span class="cb"></span></td></tr>
              <tr><td class="n">12</td><td class="nm">汇总信息</td><td class="vl">条形基础</td><td><span class="cb"></span></td></tr>
              <tr><td class="n">13</td><td class="nm">备注</td><td class="vl"></td><td><span class="cb"></span></td></tr>
              <tr class="dim"><td class="n">14</td><td class="nm nm-p"><svg class="box"><use href="#plusbox"/></svg>显示样式</td><td class="vl"></td><td></td></tr>
            </tbody>
          </table>
        </div>
      </div>
    </section>
  </main>

  <svg class="notes" viewBox="0 0 904 807" xmlns="http://www.w3.org/2000/svg">
    <ellipse cx="221" cy="127" rx="37" ry="10" fill="none" stroke="#f06a6a" stroke-width="1.200"/>
    <ellipse cx="598" cy="496" rx="29" ry="24" fill="none" stroke="#f06a6a" stroke-width="1.200"/>
    <polygon points="225,125 226,124 574,474 571,477" fill="#f04848"/>
    <polygon points="589,484 561,472 576,457" fill="#f04848"/>
  </svg>
</div>
</body>
</html>
```
FILE: styles.css
```css
* { box-sizing: border-box; }
html, body { margin: 0; padding: 0; }
body { width: 904px; height: 807px; overflow: hidden; background: #f0f0f0; font: 12px/16px "Noto Sans CJK SC", "Liberation Sans", sans-serif; color: #111; }
.sprite { display: block; width: 0; height: 0; }
i.m { font-style: normal; font-family: "Liberation Mono", monospace; font-size: 11px; letter-spacing: -0.6px; }
.app { position: relative; width: 904px; height: 807px; overflow: hidden; }
svg { flex: none; display: block; }
.ico16 { width: 16px; height: 16px; }
.ico18 { width: 18px; height: 18px; }

/* top toolbar */
.topbar { display: flex; height: 33px; }
.topleft { width: 146px; height: 33px; display: flex; align-items: center; padding-top: 2px; background: linear-gradient(#f2f2f2, #fdfdfd 40%, #eee); overflow: hidden; }
.doc { width: 16px; height: 16px; margin-left: -11px; }
.ml-open { margin-left: 10px; }
.dd { display: inline-block; flex: none; width: 0; height: 0; border: 3px solid transparent; border-top: 3px solid #222; border-bottom: 0; }
.ddg { border-top-color: #aaa; }
.ml-dd { margin-left: 5px; }
.ml-save { margin-left: 8px; }
.ml-sepa { margin-left: 6px; height: 24px; }
.ml-undo { margin-left: 7px; }
.ml-dd2 { margin-left: 6px; }
.ml-redo { margin-left: 5px; }
.sep { flex: none; width: 1px; height: 17px; background: #b8b8b8; }
.tb { display: flex; align-items: center; white-space: nowrap; background: linear-gradient(#fbfbfb, #eeeeee); }
.tb-main { width: 755px; margin-left: 3px; height: 33px; padding: 2px 0 0 4px; background: linear-gradient(#f2f2f2, #fdfdfd 40%, #ececec); overflow: hidden; }
.btn { display: inline-flex; align-items: center; flex: none; gap: 4px; margin-left: 7px; }
.btn.first { margin-left: 0; }
.btn.off { color: #a8a8a8; }
.sigma { width: 16px; text-align: center; font: bold 15px/16px "Liberation Serif", serif; }

/* shell */
.main { display: flex; height: 774px; }
.nav { width: 146px; flex: none; overflow: hidden; display: flex; flex-direction: column; }
.mid { width: 214px; margin-left: 3px; flex: none; display: flex; flex-direction: column; overflow: hidden; }
.work { width: 538px; margin-left: 3px; display: flex; flex-direction: column; flex: none; }

.title { display: flex; align-items: center; height: 15px; flex: none; background: #0056de; color: #fff; font-size: 13px; line-height: 15px; }
.title-t { flex: 1; white-space: nowrap; overflow: hidden; }
.pin { width: 9px; height: 11px; margin-right: 9px; }
.close { width: 9px; height: 9px; margin-right: 7px; }
.title.grey { background: #f0f0f0; color: #111; border: 1px solid #8a8a8a; border-right-color: #ccc; height: 14px; }

/* left navigation */
.navbtn { flex: none; margin: 1px 3px 0 -11px; height: 22px; border: 1px solid #a5a5a5; background: #f0f0f0; text-align: center; line-height: 20px; }
.expand { flex: none; height: 27px; display: flex; align-items: center; gap: 7px; background: #f0f0f0; }
.pm { display: block; }
.plus { width: 10px; height: 9px; background: linear-gradient(#222, #222) center/3px 9px no-repeat, linear-gradient(#222, #222) center/10px 3px no-repeat; }
.minus { width: 16px; height: 8px; background: linear-gradient(#222, #222) 0 0/7px 2px no-repeat, linear-gradient(#222, #222) 0 100%/16px 3px no-repeat; }
.navtree { flex: 1; margin-right: 3px; background-color: #fff; border: 1px solid #8a8a8a; border-left: 0; padding-top: 1px; overflow: hidden;
  background-image: repeating-linear-gradient(#777 0 1px, transparent 1px 2px); background-size: 1px 100%; background-position: 2px 0; background-repeat: no-repeat; }
.t1, .t2 { height: 16px; display: flex; align-items: center; white-space: nowrap; }
.chev { width: 8px; height: 16px; background: #fff; }
.fld { width: 17px; height: 16px; margin: 0 4px 0 5px; }
.t2 { padding-left: 33px; gap: 4px;
  background-image: repeating-linear-gradient(#777 0 1px, transparent 1px 2px), repeating-linear-gradient(90deg, #777 0 1px, transparent 1px 2px);
  background-size: 1px 16px, 12px 1px; background-position: 21px 0, 21px 8px; background-repeat: no-repeat; }
.t2.end { background-size: 1px 8px, 12px 1px; }
.hl { display: flex; align-items: center; gap: 4px; height: 16px; margin-left: -3px; padding: 0 3px; background: #d6d6d6; }
.cols { margin-left: 6px; }
.new { align-self: flex-start; height: 8px; margin-left: 1px; padding: 0 1px; background: #ffe000; font: bold 8px/8px "Liberation Sans", sans-serif; color: #222; }

/* component list */
.newbar { flex: none; height: 27px; display: flex; align-items: center; padding-left: 5px; background: linear-gradient(#fbfbfb, #eee); margin-top: 2px; margin-right: 1px; }
.newicon { width: 18px; height: 16px; }
.newtxt { margin-left: 3px; }
.dd-new { margin-left: 2px; }
.del { width: 15px; height: 15px; margin-left: 6px; color: #333; stroke-width: 1.500; }
.cpy { margin-left: 7px; }
.search { flex: none; height: 25px; display: flex; }
.sinput { width: 189px; margin-left: 2px; height: 24px; border: 1px solid #888; background: #fff; color: #999; font-size: 13px; line-height: 22px; padding-left: 3px; }
.sbtn { width: 22px; height: 24px; display: flex; align-items: center; justify-content: center; background: #eee; margin-left: 1px; }
.ctree { flex: none; height: 241px; margin: 0 2px 0 1px; border: 1px solid #8a8a8a; background: #fff; padding-top: 1px; }
.c1, .c2, .c3 { height: 16px; display: flex; align-items: center; white-space: nowrap; }
.c1 { padding-left: 8px; }
.c1 .strip { width: 17px; height: 16px; margin: 0 3px 0 8px; }
.c2 { padding-left: 27px; }
.csel { display: flex; align-items: center; height: 16px; width: 25px; margin-left: 2px; padding-left: 6px; background: #cfe6fa; }
.gear { width: 12px; height: 12px; }
.cname { width: 28px; height: 16px; background: #3a80dc; padding-left: 1px; }
.c3 { padding-left: 63px; background-image: repeating-linear-gradient(#777 0 1px, transparent 1px 2px), repeating-linear-gradient(90deg, #777 0 1px, transparent 1px 2px); background-size: 1px 8px, 13px 1px; background-position: 50px 0, 50px 8px; background-repeat: no-repeat; }
.csub { margin-left: 7px; }

/* drawing panel */
.t-draw { margin-top: 6px; }
.tabs { flex: none; display: flex; align-items: flex-end; height: 22px; padding-left: 1px; }
.tab { height: 18px; width: 91px; text-align: center; line-height: 18px; background: #ececec; border: 1px solid #cfcfcf; border-bottom: 0; }
.tab.on { height: 21px; width: 88px; background: #fff; border-color: #e0e0e0; line-height: 20px; }
.dpanel { flex: none; height: 271px; margin: 0 2px 0 1px; background: #fafafa; border: 1px solid #d8d8d8; padding: 3px 0 0 2px; }
.dbar { display: flex; height: 23px; gap: 2px; align-items: stretch; margin-left: 1px; }
.dbtn { display: flex; align-items: center; justify-content: center; background: #f0f0f0; border: 1px solid #bbb; border-top-color: #ddd; border-left-color: #ddd; color: #222; }
.w57 { width: 57px; } .w10 { width: 10px; } .w56 { width: 56px; }
.more { width: 12px; margin-left: 6px; height: 22px; text-align: center; font-size: 13px; line-height: 14px; font-weight: bold; background: #f0f0f0; border: 1px solid #ddd; }
.dframe { margin-top: 2px; width: 205px; height: 238px; border: 2px solid #aaa; background: #f0f0f0; }
.dscroll { display: flex; height: 218px; }
.dt { table-layout: fixed; border-collapse: collapse; width: 184px; flex: none; align-self: flex-start; }
.c-n { width: 21px; } .c-name { width: 151px; } .c-r { width: 12px; }
.dt th, .dt td, .pt th, .pt td { border: 1px solid #c6c6c6; padding: 0; overflow: hidden; white-space: nowrap; font-weight: normal; }
.dt th { height: 25px; }
.dt td { height: 19px; background: #fff; padding-left: 2px; line-height: 15px; }
.n { background: #f2f2f2; text-align: center; padding: 0 !important; }
.dt th.n { background: #f4f4f4; }
.hot { background: linear-gradient(#fbdc9e, #f1bb63); color: #6a0a70; font-size: 13px; }
.plain { background: #fff; text-align: left; }
.dt td.w { background: #fff; padding-left: 3px; }
.box { display: inline-block; vertical-align: -2px; width: 13px; height: 13px; margin-right: 4px; }
.dt .y td { background: #ffff00; }
.dt .y td.n { background: #f2f2f2; }
.dt td.l { padding-left: 30px;
  background-image: linear-gradient(#aaa, #aaa), linear-gradient(#aaa, #aaa); background-size: 1px 100%, 16px 1px; background-position: 9px 0, 9px 50%; background-repeat: no-repeat; }
.dt td.l.last { background-size: 1px 50%, 16px 1px; }
.dt .cur td.n { background: #fbd794; color: #6a0a70; font-weight: bold; }
.dt td.active { background: #ffff66; position: relative; overflow: visible; outline: 3px solid #000; outline-offset: -2px; padding-left: 3px; }
.dt td.active::after { content: ""; position: absolute; right: -2px; bottom: -2px; width: 4px; height: 4px; background: #777; border: 1px solid #fff; box-sizing: content-box; }
.vbar { width: 15px; flex: none; background: #f0f0f0; display: flex; flex-direction: column; align-items: center; height: 216px; }
.arr { height: 17px; line-height: 18px; color: #555; font-size: 12px; font-weight: bold; }
.vthumb { width: 15px; height: 102px; background: #c8c8c8; }
.arr-d { margin-top: auto; }
.hbar { display: flex; align-items: center; height: 16px; background: #f0f0f0; }
.harr { width: 18px; text-align: center; font-size: 15px; line-height: 14px; font-weight: bold; color: #555; }
.hthumb { width: 17px; height: 16px; background: #c8c8c8; }
.harr-r { margin-left: auto; margin-right: 18px; }

/* cad layers */
.t-cad { margin-top: 7px; }
.title.t-cad { height: 16px; }
.cadt { margin-left: -1px; }
.cadtree { flex: 1; margin: 1px 2px 0 1px; background: #fff; border: 1px solid #8a8a8a; padding-top: 1px; }
.l1 { height: 15px; display: flex; align-items: center; padding-left: 10px; white-space: nowrap; background: repeating-linear-gradient(90deg, #777 0 1px, transparent 1px 2px) 19px 50%/5px 1px no-repeat; }
.sq { width: 13px; height: 13px; margin: 0 4px 0 7px; border: 2px solid #fff; outline: 1px solid #777; outline-offset: -1px; background: #333; }

/* work area toolbars */
.tb-edit { flex: none; height: 24px; padding-left: 11px; overflow: hidden; }
.tb-edit .sep { margin-left: 7px; }
.tb-edit .sep + .btn { margin-left: 4px; }
.tb-sel { flex: none; height: 26px; margin-top: 3px; padding-left: 9px; overflow: hidden; }
.sel { display: flex; align-items: center; flex: none; position: relative; height: 23px; margin-right: 2px; background: #fff; padding-left: 1px; border-right: 9px solid #f0f0f0; }
.sel .dd { position: absolute; right: -7px; top: 10px; }
.s58 { width: 58px; } .s70 { width: 70px; } .s68 { width: 68px; } .s69 { width: 69px; } .s50 { width: 52px; }
.ml4 { margin-left: 2px; }
.sp-sel { margin-left: 3px; height: 20px; }
.tog { display: inline-flex; align-items: center; flex: none; gap: 4px; height: 24px; padding: 0 2px; border: 1px solid #1e88d8; background: #e2f0fb; }
.tog-a { margin-left: 2px; width: 50px; }
.b-edit { margin-left: 3px; gap: 3px; }
.tog-b { margin-left: 5px; width: 60px; }
.tb-draw { flex: none; height: 29px; margin-top: 2px; padding: 0 0 2px 16px; overflow: hidden; }
.cur-i { width: 12px; height: 16px; }
.b-pick { margin-left: 0; gap: 3px; }
.d-pick { margin-left: 6px; }
.sp-pick { margin-left: 8px; }
.tog-line { margin-left: 1px; width: 52px; padding-left: 2px; }
.b-pt { margin-left: 1px; gap: 5px; }
.b-arc { margin-left: 6px; gap: 4px; }
.d-arc { margin-left: 6px; }
.s50 { margin-left: 5px; }
.b-rect { margin-left: 7px; }
.sp-rect { margin: 0 -2px 0 7px; }
.d-smart { margin-left: 2px; }
.grip { flex: none; width: 2px; height: 20px; margin-left: 10px; background: repeating-linear-gradient(#aaa 0 2px, transparent 2px 5px); }
.blank { flex: none; width: 23px; height: 24px; margin-left: 3px; background: #fafafa; }

/* free canvas */
.canvas { flex: 1; position: relative; background: #000; overflow: hidden; }
.cad { width: 538px; height: 690px; }
.ct { fill: #c4c4c4; font-family: "Liberation Sans", sans-serif; }
.t-d { font-size: 14px; font-weight: bold; text-anchor: middle; }
.t-a { font-size: 13px; font-weight: bold; text-anchor: middle; }
.t-s { font-size: 6px; text-anchor: middle; }
.t-top { font-size: 15px; }
.t-8k { font-size: 15px; }
.t-mini { font-size: 4px; fill: #888; }

/* property editor window */
.editor { position: absolute; left: 4px; top: 240px; width: 396px; bottom: 0; background: #fff; border-top: 1px solid #555; border-right: 2px solid #bbb; }
.ed-title { display: flex; align-items: center; justify-content: space-between; height: 29px; padding: 0 1px 0 8px; color: #b0b0b0; }
.ed-x { width: 18px; height: 18px; background: #e8e8e8; color: #fff; text-align: center; line-height: 18px; font-weight: bold; margin-top: 2px; }
.pt { table-layout: fixed; border-collapse: collapse; width: 394px; margin-left: 1px; border-top: 1px solid #888; }
.p-n { width: 21px; } .p-name { width: 121px; } .p-val { width: 219px; } .p-add { width: 33px; }
.pt th { height: 23px; }
.ph { background: linear-gradient(#fff, #eee); color: #222; }
.pt th.n { background: #f4f4f4; }
.pt td { height: 19px; background: #fff; line-height: 15px; }
.pt td.nm { padding-left: 19px; }
.pt td.vl { padding-left: 2px; }
.now td.n { background: #fbd794; color: #a05010; }
.pt .now td.nm { background: #0078d7; color: #fff; }
.pt .now td.vl { background: #d6e8f8; }
.dim .nm, .dim .vl { color: #999; }
.cb { display: block; width: 13px; height: 13px; border: 1px solid #333; margin: 0 auto; }
.pt td.nm-p { padding-left: 3px; }
.nm-p .box { margin-right: 5px; }

/* hand-drawn annotation over the window */
.notes { position: absolute; left: 0; top: 0; width: 904px; height: 807px; pointer-events: none; }
```
